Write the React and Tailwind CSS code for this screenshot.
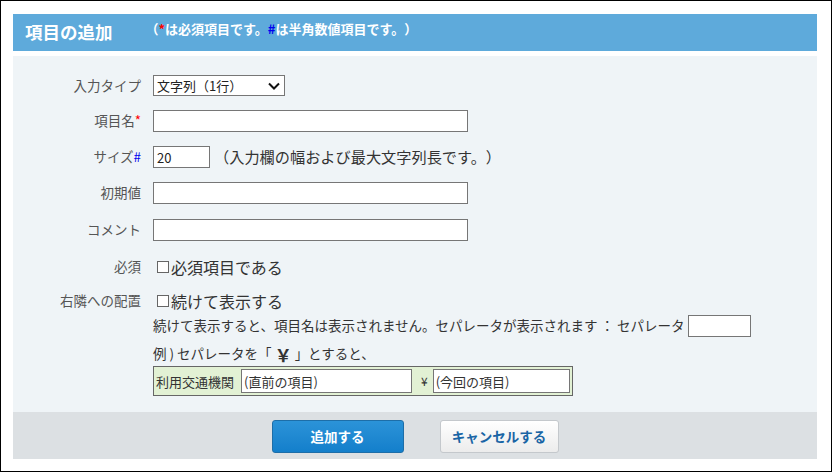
import React from "react";

const font = { fontFamily: '"Noto Sans CJK JP", "Noto Sans", sans-serif' };

// label column for the form rows
const Label = ({ children }) => (
  <div className="w-[128px] shrink-0 text-right text-[13.5px] text-[#555] leading-none">{children}</div>
);

const Check = ({ text }) => (
  <label className="flex items-center text-[16px] text-[#333] leading-none">
    <span className="w-[12px] h-[12px] border border-[#666] bg-white ml-[4px] mr-[2px]" />
    {text}
  </label>
);

export default function App() {
  return (
    <div
      style={font}
      className="w-[832px] h-[472px] border border-black bg-white pl-[12px] pt-[13px] pr-[14px] [text-spacing-trim:space-all]"
    >
      <div className="h-[37px] bg-[#5eaadb] flex items-start pl-[12px]">
        <div className="text-white font-bold text-[17.5px] leading-none mt-[9px]">項目の追加</div>
        <div className="text-white font-bold text-[13px] leading-none ml-[33px] mt-[8px]">
          （<span className="text-[#ff0000]">*</span>は必須項目です。<span className="text-[#0000ee]">#</span>は半角数値項目です。）
        </div>
      </div>

      <div className="mt-[5px] h-[356px] bg-[#eff4f7] pt-[19px]">
        <div className="flex items-center h-[21px]">
          <Label>入力タイプ</Label>
          <div className="ml-[12px] w-[132px] h-[21px] border border-[#767676] bg-white flex items-center justify-between pl-[3px] pr-[4px] text-[13px] text-[#222]">
            <span>文字列（1行）</span>
            <svg width="12" height="8" viewBox="0 0 12 8">
              <path d="M1 1.5 L6 6.5 L11 1.5" fill="none" stroke="#111" strokeWidth="2" />
            </svg>
          </div>
        </div>

        <div className="flex items-center h-[22px] mt-[14px]">
          <Label>
            項目名<span className="text-[#ff0000]">*</span>
          </Label>
          <input className="ml-[12px] w-[315px] h-[22px] border border-[#767676] bg-white outline-none" />
        </div>

        <div className="flex items-center h-[22px] mt-[14px]">
          <Label>
            サイズ<span className="text-[#0000ee]">#</span>
          </Label>
          <input
            defaultValue="20"
            className="ml-[12px] w-[57px] h-[22px] border border-[#767676] bg-white px-[3px] text-[13px] text-[#222] outline-none"
          />
          <span className="ml-[4px] text-[15.2px] text-[#333] leading-none">（入力欄の幅および最大文字列長です。）</span>
        </div>

        <div className="flex items-center h-[22px] mt-[14px]">
          <Label>初期値</Label>
          <input className="ml-[12px] w-[315px] h-[22px] border border-[#767676] bg-white outline-none" />
        </div>

        <div className="flex items-center h-[22px] mt-[15px]">
          <Label>コメント</Label>
          <input className="ml-[12px] w-[315px] h-[22px] border border-[#767676] bg-white outline-none" />
        </div>

        <div className="flex items-center h-[24px] mt-[14px]">
          <Label>必須</Label>
          <div className="ml-[12px]">
            <Check text="必須項目である" />
          </div>
        </div>

        <div className="flex h-[24px] mt-[10px] items-center">
          <Label>右隣への配置</Label>
          <div className="ml-[12px]">
            <Check text="続けて表示する" />
          </div>
        </div>

        <div className="ml-[140px] text-[13.5px] text-[#333]">
          <div className="flex items-center h-[22px] mt-[2px]">
            <span className="leading-none whitespace-nowrap">続けて表示すると、項目名は表示されません。セパレータが表示されます ： セパレータ</span>
            <input className="ml-[3px] w-[63px] h-[22px] border border-[#767676] bg-white outline-none shrink-0" />
          </div>
          <div className="flex items-center h-[22px] mt-[6px] leading-none">
            例 ) セパレータを「<span className="font-bold text-[17px] mx-[3px]">￥</span>」とすると、
          </div>
          <div className="mt-[1px] w-[420px] h-[30px] border border-[#666] bg-[#e2f1d4] flex items-center pl-[2px] text-[13px] text-[#333]">
            <span className="leading-none">利用交通機関</span>
            <div className="ml-[7px] w-[171px] h-[24px] border border-[#767676] bg-white flex items-center px-[2px] leading-none">
              (直前の項目)
            </div>
            <span className="ml-[9px] mr-[5px] text-[12px] leading-none">¥</span>
            <div className="w-[137px] h-[24px] border border-[#767676] bg-white flex items-center px-[2px] leading-none">
              (今回の項目)
            </div>
          </div>
        </div>
      </div>

      <div className="h-[47px] bg-[#dce0e3] flex items-center justify-center gap-[36px] pt-[1px]">
        <button className="w-[132px] h-[33px] rounded-[3px] border border-[#1d6ea8] bg-gradient-to-b from-[#2b93d8] to-[#137fcb] text-white font-bold text-[13.5px]">
          追加する
        </button>
        <button className="w-[119px] h-[33px] rounded-[3px] border border-[#c4c8cc] bg-gradient-to-b from-white to-[#ececec] text-[#1a65a5] font-bold text-[13.5px]">
          キャンセルする
        </button>
      </div>
    </div>
  );
}
